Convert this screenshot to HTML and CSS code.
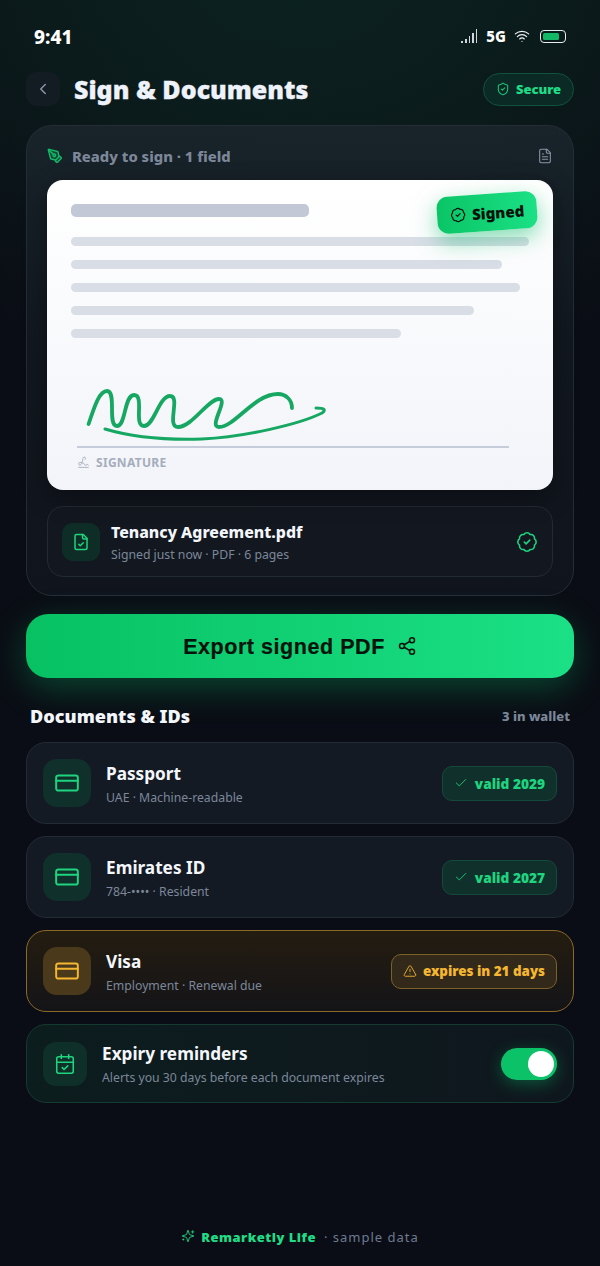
FILE: index.html
```html
<!DOCTYPE html>
<html lang="en">
<head>
    <meta charset="UTF-8">
    <meta name="viewport" content="width=device-width, initial-scale=1.0">
    <title>Sign &amp; Documents</title>
    <link rel="stylesheet" href="styles.css">
</head>
<body>
    <div class="screen">
        <div class="status-bar">
            <span class="time">9:41</span>
            <div class="status-right">
                <div class="signal"><i></i><i></i><i></i><i></i><i></i></div>
                <span class="net">5G</span>
                <svg class="icon wifi" viewBox="0 0 24 24"><path d="M12 20h.01"/><path d="M2 8.82a15 15 0 0 1 20 0"/><path d="M5 12.859a10 10 0 0 1 14 0"/><path d="M8.5 16.429a5 5 0 0 1 7 0"/></svg>
                <div class="battery"><div class="battery-fill"></div></div>
            </div>
        </div>

        <header class="top-bar">
            <button class="back-btn"><svg class="icon" viewBox="0 0 24 24"><path d="m15 18-6-6 6-6"/></svg></button>
            <h1>Sign &amp; Documents</h1>
            <div class="secure-pill">
                <svg class="icon" viewBox="0 0 24 24"><path d="M20 13c0 5-3.5 7.5-7.66 8.95a1 1 0 0 1-.67-.01C7.5 20.5 4 18 4 13V6a1 1 0 0 1 1-1c2 0 4.5-1.2 6.24-2.72a1.17 1.17 0 0 1 1.52 0C14.51 3.81 17 5 19 5a1 1 0 0 1 1 1z"/><path d="m9 12 2 2 4-4"/></svg>
                Secure
            </div>
        </header>

        <section class="sign-card">
            <div class="sign-head">
                <svg class="icon pen" viewBox="0 0 24 24"><path d="M15.707 21.293a1 1 0 0 1-1.414 0l-1.586-1.586a1 1 0 0 1 0-1.414l5.586-5.586a1 1 0 0 1 1.414 0l1.586 1.586a1 1 0 0 1 0 1.414z"/><path d="m18 13-1.375-6.874a1 1 0 0 0-.746-.776L3.235 2.028a1 1 0 0 0-1.207 1.207L5.35 15.879a1 1 0 0 0 .776.746L13 18"/><path d="m2.3 2.3 7.286 7.286"/><circle cx="11" cy="11" r="2"/></svg>
                <span class="sign-title">Ready to sign · 1 field</span>
                <svg class="icon doc" viewBox="0 0 24 24"><path d="M15 2H6a2 2 0 0 0-2 2v16a2 2 0 0 0 2 2h12a2 2 0 0 0 2-2V7Z"/><path d="M14 2v4a2 2 0 0 0 2 2h4"/><path d="M10 9H8"/><path d="M16 13H8"/><path d="M16 17H8"/></svg>
            </div>

            <div class="paper">
                <div class="signed-stamp">
                    <svg class="icon" viewBox="0 0 24 24"><path d="M3.85 8.62a4 4 0 0 1 4.78-4.77 4 4 0 0 1 6.74 0 4 4 0 0 1 4.78 4.78 4 4 0 0 1 0 6.74 4 4 0 0 1-4.77 4.78 4 4 0 0 1-6.75 0 4 4 0 0 1-4.78-4.77 4 4 0 0 1 0-6.76Z"/><path d="m9 12 2 2 4-4"/></svg>
                    Signed
                </div>
                <div class="line line-title"></div>
                <div class="line w100"></div>
                <div class="line w94"></div>
                <div class="line w98"></div>
                <div class="line w88"></div>
                <div class="line w72"></div>
                <svg class="scribble" viewBox="80 385 260 60">
                    <path class="scribble-main" d="M88.6 424 C94 408 99 391 107 391 C117 391 107 426 117 426 C126 426 124 395 134 395 C145 395 133 426 144 426 C154 426 159 396 170 396 C181 396 166 427 178 427 C192 427 208 399 219 399 C229 399 208 427 219 427 C235 427 254 394 278 394 C286 394 292 400 292 408"/>
                    <path class="scribble-low" d="M105 429 C135 438 170 440 202 439 C245 437 300 424 322 413 C326 410 325 408 316 408"/>
                </svg>
                <div class="sig-line"></div>
                <div class="sig-label">
                    <svg class="icon" viewBox="0 0 24 24"><path d="m21 17-2.156-1.868A.5.5 0 0 0 18 15.5v.5a1 1 0 0 1-1 1h-2a1 1 0 0 1-1-1c0-2.545-3.991-3.97-8.5-4a1 1 0 0 0 0 5c4.153 0 4.745-11.295 5.708-13.5a2.5 2.5 0 1 1 3.31 3.284"/><path d="M3 21h18"/></svg>
                    SIGNATURE
                </div>
            </div>

            <div class="file-row">
                <div class="file-icon">
                    <svg class="icon" viewBox="0 0 24 24"><path d="M15 2H6a2 2 0 0 0-2 2v16a2 2 0 0 0 2 2h12a2 2 0 0 0 2-2V7Z"/><path d="M14 2v4a2 2 0 0 0 2 2h4"/><path d="m9 15 2 2 4-4"/></svg>
                </div>
                <div class="file-text">
                    <div class="file-name">Tenancy Agreement.pdf</div>
                    <div class="file-sub">Signed just now · PDF · 6 pages</div>
                </div>
                <svg class="icon file-badge" viewBox="0 0 24 24"><path d="M3.85 8.62a4 4 0 0 1 4.78-4.77 4 4 0 0 1 6.74 0 4 4 0 0 1 4.78 4.78 4 4 0 0 1 0 6.74 4 4 0 0 1-4.77 4.78 4 4 0 0 1-6.75 0 4 4 0 0 1-4.78-4.77 4 4 0 0 1 0-6.76Z"/><path d="m9 12 2 2 4-4"/></svg>
            </div>
        </section>

        <button class="export-btn">
            Export signed PDF
            <svg class="icon" viewBox="0 0 24 24"><circle cx="18" cy="5" r="3"/><circle cx="6" cy="12" r="3"/><circle cx="18" cy="19" r="3"/><path d="m8.59 13.51 6.83 3.98"/><path d="m15.41 6.51-6.82 3.98"/></svg>
        </button>

        <div class="section-head">
            <h2>Documents &amp; IDs</h2>
            <span class="section-count">3 in wallet</span>
        </div>

        <div class="doc-list">
            <div class="doc-card">
                <div class="doc-icon"><svg class="icon" viewBox="0 0 24 24"><rect width="20" height="14" x="2" y="5" rx="2"/><path d="M2 10h20"/></svg></div>
                <div class="doc-text">
                    <div class="doc-name">Passport</div>
                    <div class="doc-sub">UAE · Machine-readable</div>
                </div>
                <div class="doc-pill"><svg class="icon" viewBox="0 0 24 24"><path d="M20 6 9 17l-5-5"/></svg>valid 2029</div>
            </div>
            <div class="doc-card">
                <div class="doc-icon"><svg class="icon" viewBox="0 0 24 24"><rect width="20" height="14" x="2" y="5" rx="2"/><path d="M2 10h20"/></svg></div>
                <div class="doc-text">
                    <div class="doc-name">Emirates ID</div>
                    <div class="doc-sub">784-•••• · Resident</div>
                </div>
                <div class="doc-pill"><svg class="icon" viewBox="0 0 24 24"><path d="M20 6 9 17l-5-5"/></svg>valid 2027</div>
            </div>
            <div class="doc-card warn">
                <div class="doc-icon"><svg class="icon" viewBox="0 0 24 24"><rect width="20" height="14" x="2" y="5" rx="2"/><path d="M2 10h20"/></svg></div>
                <div class="doc-text">
                    <div class="doc-name">Visa</div>
                    <div class="doc-sub">Employment · Renewal due</div>
                </div>
                <div class="doc-pill"><svg class="icon" viewBox="0 0 24 24"><path d="m21.73 18-8-14a2 2 0 0 0-3.48 0l-8 14A2 2 0 0 0 4 21h16a2 2 0 0 0 1.73-3"/><path d="M12 9v4"/><path d="M12 17h.01"/></svg>expires in 21 days</div>
            </div>
            <div class="reminder-card">
                <div class="reminder-icon"><svg class="icon" viewBox="0 0 24 24"><path d="M8 2v4"/><path d="M16 2v4"/><rect width="18" height="18" x="3" y="4" rx="2"/><path d="M3 10h18"/><path d="m9 16 2 2 4-4"/></svg></div>
                <div class="doc-text">
                    <div class="doc-name">Expiry reminders</div>
                    <div class="doc-sub">Alerts you 30 days before each document expires</div>
                </div>
                <div class="toggle"><div class="knob"></div></div>
            </div>
        </div>

        <footer class="page-foot">
            <svg class="icon" viewBox="0 0 24 24"><path d="M9.937 15.5A2 2 0 0 0 8.5 14.063l-6.135-1.582a.5.5 0 0 1 0-.962L8.5 9.936A2 2 0 0 0 9.937 8.5l1.582-6.135a.5.5 0 0 1 .963 0L14.063 8.5A2 2 0 0 0 15.5 9.937l6.135 1.581a.5.5 0 0 1 0 .964L15.5 14.063a2 2 0 0 0-1.437 1.437l-1.582 6.135a.5.5 0 0 1-.963 0z"/><path d="M20 3v4"/><path d="M22 5h-4"/><path d="M4 17v2"/><path d="M5 18H3"/></svg>
            <span class="brand">Remarketly Life</span>
            <span class="foot-note">· sample data</span>
        </footer>
    </div>
</body>
</html>
```

FILE: styles.css
```css
* {
    box-sizing: border-box;
}
html, body {
    margin: 0;
    height: 100%;
}
body {
    background-color: #0a0d15;
    font-family: "Noto Sans", sans-serif;
    color: #f3f6fb;
}
.screen {
    min-height: 1266px;
    display: flex;
    flex-direction: column;
    padding: 0 26px;
    background: radial-gradient(ellipse 560px 420px at 50% -40px, #0c2320 0%, #0b1a1b 50%, rgba(10, 13, 21, 0) 100%);
}
.icon {
    width: 18px;
    height: 18px;
    fill: none;
    stroke: currentColor;
    stroke-width: 2;
    stroke-linecap: round;
    stroke-linejoin: round;
    flex-shrink: 0;
}

/* barra de estado */
.status-bar {
    height: 72px;
    display: flex;
    align-items: center;
    justify-content: space-between;
    padding: 0 8px;
}
.time {
    font-size: 19px;
    font-weight: 800;
    color: #fff;
    margin-top: 2px;
}
.status-right {
    display: flex;
    align-items: center;
    gap: 8px;
}
.signal {
    display: flex;
    align-items: flex-end;
    gap: 2px;
    height: 14px;
    margin-right: 1px;
}
.signal i {
    width: 1.6px;
    background: #cfd6df;
}
.signal i:nth-child(1) { height: 2px; }
.signal i:nth-child(2) { height: 4px; }
.signal i:nth-child(3) { height: 7px; }
.signal i:nth-child(4) { height: 10px; }
.signal i:nth-child(5) { height: 14px; }
.net {
    font-size: 15px;
    font-weight: 800;
    color: #fff;
}
.wifi {
    width: 16px;
    height: 16px;
    color: #eef2f6;
    stroke-width: 1.8;
}
.battery {
    width: 26px;
    height: 13px;
    border: 1.3px solid #e8edf2;
    border-radius: 4px;
    padding: 2px;
    margin-left: 2px;
}
.battery-fill {
    width: 16px;
    height: 100%;
    background: #12b865;
    border-radius: 1.5px;
}

/* cabecera */
.top-bar {
    height: 34px;
    display: flex;
    align-items: center;
    margin-bottom: 19px;
}
.back-btn {
    width: 34px;
    height: 34px;
    border: none;
    border-radius: 11px;
    background: #141c23;
    color: #8a94a6;
    display: flex;
    align-items: center;
    justify-content: center;
    padding: 0;
    margin-right: 14px;
}
.top-bar h1 {
    margin: 0;
    flex: 1;
    font-size: 25px;
    font-weight: 900;
    -webkit-text-stroke: 0.3px #eef2fb;
    color: #eef2fb;
}
.secure-pill {
    height: 33px;
    padding: 0 12px;
    border-radius: 17px;
    border: 1px solid #12523c;
    background: #0b2a25;
    color: #1fdc86;
    font-size: 13px;
    font-weight: 900;
    display: flex;
    align-items: center;
    gap: 6px;
}
.secure-pill .icon {
    width: 14px;
    height: 14px;
    stroke-width: 1.8;
    color: #1cc47a;
}

/* tarjeta de firma */
.sign-card {
    height: 471px;
    border: 1px solid #242d36;
    border-radius: 26px;
    padding: 20px;
    background: linear-gradient(180deg, #18232a 0%, #121820 45%, #10141d 100%);
}
.sign-head {
    height: 20px;
    display: flex;
    align-items: center;
    gap: 9px;
    margin-bottom: 14px;
}
.pen {
    width: 16px;
    height: 16px;
    color: #12b865;
    fill: rgba(18, 184, 101, 0.25);
    stroke-width: 2.2;
}
.sign-title {
    flex: 1;
    font-size: 14.8px;
    font-weight: 800;
    color: #7c8799;
}
.doc {
    width: 16px;
    height: 16px;
    color: #8a94a6;
    stroke-width: 1.6;
}
.paper {
    position: relative;
    height: 310px;
    border-radius: 16px;
    padding: 24px;
    background: linear-gradient(180deg, #ffffff 0%, #f2f4f9 100%);
    box-shadow: 0 8px 24px rgba(0, 0, 0, 0.35);
}
.line {
    height: 9px;
    border-radius: 5px;
    background: #d8dde6;
    margin-bottom: 14px;
}
.line-title {
    width: 52%;
    height: 13px;
    background: #c2c8d6;
    margin-bottom: 20px;
}
.w100 { width: 100%; }
.w94 { width: 94%; }
.w98 { width: 98%; }
.w88 { width: 88%; }
.w72 { width: 72%; }
.signed-stamp {
    position: absolute;
    top: 14px;
    right: 16px;
    height: 37px;
    padding: 0 13px;
    border-radius: 11px;
    background: linear-gradient(90deg, #0ac566 0%, #1be085 100%);
    color: #04120c;
    font-size: 15px;
    font-weight: 900;
    display: flex;
    align-items: center;
    gap: 6px;
    transform: rotate(-4deg);
    box-shadow: 0 8px 22px rgba(11, 190, 105, 0.5);
}
.signed-stamp .icon {
    width: 16px;
    height: 16px;
    stroke-width: 1.8;
}
.scribble {
    display: block;
    width: 260px;
    height: 60px;
    margin: 47px 0 0 9px;
    fill: none;
    stroke: #16a862;
    stroke-linecap: round;
    stroke-linejoin: round;
}
.scribble-main {
    stroke-width: 3.8;
}
.scribble-low {
    stroke-width: 3;
}
.sig-line {
    height: 2px;
    background: #c6ccd9;
    margin: 1px 20px 0 6px;
}
.sig-label {
    display: flex;
    align-items: center;
    gap: 6px;
    margin: 6px 0 0 6px;
    font-size: 12px;
    font-weight: 700;
    letter-spacing: 0.3px;
    color: #a5adbb;
}
.sig-label .icon {
    width: 13px;
    height: 13px;
    stroke-width: 1.6;
}
.file-row {
    height: 71px;
    margin-top: 16px;
    padding: 0 14px;
    border: 1px solid #222a33;
    border-radius: 16px;
    background: #131820;
    display: flex;
    align-items: center;
    gap: 11px;
}
.file-icon {
    width: 38px;
    height: 38px;
    border-radius: 11px;
    background: #0f2d27;
    color: #1fd47f;
    display: flex;
    align-items: center;
    justify-content: center;
}
.file-text {
    flex: 1;
    padding-top: 1px;
}
.file-name {
    font-size: 15.85px;
    font-weight: 800;
    color: #f3f6fb;
    line-height: 22px;
}
.file-sub {
    font-size: 12.25px;
    color: #7c8799;
    line-height: 19px;
    margin-top: 2px;
}
.file-badge {
    width: 22px;
    height: 22px;
    color: #1fd47f;
    stroke-width: 1.7;
}

/* boton principal */
.export-btn {
    height: 64px;
    margin-top: 18px;
    padding: 2px 0 0;
    border: none;
    border-radius: 22px;
    background: linear-gradient(90deg, #07c163 0%, #1be085 100%);
    color: #04140c;
    font-family: "Liberation Sans", Arial, sans-serif;
    font-size: 21.5px;
    font-weight: 700;
    letter-spacing: 0.55px;
    -webkit-text-stroke: 0.2px #04140c;
    display: flex;
    align-items: center;
    justify-content: center;
    gap: 12px;
    box-shadow: 0 10px 34px rgba(10, 200, 110, 0.3);
}
.export-btn .icon {
    width: 20px;
    height: 20px;
    stroke-width: 1.8;
    margin-top: -2px;
}

/* documentos */
.section-head {
    display: flex;
    align-items: center;
    justify-content: space-between;
    height: 24px;
    margin: 26px 4px 14px;
}
.section-head h2 {
    margin: 0;
    font-size: 18.1px;
    font-weight: 900;
    color: #f3f6fb;
}
.section-count {
    font-size: 13px;
    font-weight: 800;
    color: #7c8799;
}
.doc-list {
    display: flex;
    flex-direction: column;
    gap: 12px;
}
.doc-card {
    height: 82px;
    padding: 0 16px;
    border: 1px solid #232b35;
    border-radius: 20px;
    background: #141a24;
    display: flex;
    align-items: center;
    gap: 15px;
}
.doc-card .doc-text {
    padding-top: 2px;
}
.doc-icon {
    width: 48px;
    height: 48px;
    border-radius: 14px;
    background: #10302b;
    color: #1fd47f;
    display: flex;
    align-items: center;
    justify-content: center;
}
.doc-icon .icon {
    width: 26px;
    height: 26px;
    stroke-width: 1.8;
}
.doc-text {
    flex: 1;
}
.doc-name {
    font-size: 17.2px;
    font-weight: 700;
    line-height: 24px;
    margin-top: 1px;
    color: #f3f6fb;
}
.doc-sub {
    font-size: 12.25px;
    line-height: 18px;
    margin-top: 3px;
    color: #7c8799;
}
.doc-pill {
    height: 35px;
    padding: 0 11px;
    border: 1px solid #16493d;
    border-radius: 10px;
    background: #10302b;
    color: #1fd47f;
    font-size: 13.7px;
    font-weight: 900;
    display: flex;
    align-items: center;
    gap: 7px;
}
.doc-pill .icon {
    width: 14px;
    height: 14px;
    stroke-width: 1.5;
}
.doc-card.warn {
    border-color: #8b6a27;
    background: linear-gradient(180deg, #241c10 0%, #141418 100%);
}
.warn .doc-icon {
    background: #4a3a1b;
    color: #f5b731;
}
.warn .doc-pill {
    border-color: #7d6228;
    background: #33291a;
    color: #f5b731;
    font-size: 13.4px;
    gap: 6px;
}
.reminder-card {
    height: 79px;
    padding: 0 16px;
    border: 1px solid #153a30;
    border-radius: 20px;
    background: linear-gradient(90deg, #0c1d1e 0%, #0f171e 100%);
    display: flex;
    align-items: center;
    gap: 15px;
}
.reminder-icon {
    width: 44px;
    height: 44px;
    border-radius: 13px;
    background: #0f2f29;
    color: #1fd47f;
    display: flex;
    align-items: center;
    justify-content: center;
}
.reminder-icon .icon {
    width: 22px;
    height: 22px;
    stroke-width: 1.7;
}
.toggle {
    width: 56px;
    height: 32px;
    border-radius: 16px;
    background: #0cc268;
    padding: 3px;
    display: flex;
    justify-content: flex-end;
    box-shadow: 0 4px 16px rgba(10, 200, 110, 0.35);
}
.knob {
    width: 26px;
    height: 26px;
    border-radius: 50%;
    background: #fff;
}

/* pie */
.page-foot {
    margin-top: auto;
    height: 38px;
    display: flex;
    align-items: flex-start;
    justify-content: center;
    gap: 6px;
    font-size: 13px;
    line-height: 18px;
}
.page-foot .icon {
    width: 14px;
    height: 14px;
    color: #1cc47a;
    stroke-width: 1.7;
    margin-top: 1px;
}
.brand {
    font-weight: 900;
    color: #1fdc86;
    letter-spacing: 0.5px;
    margin-right: 2px;
}
.foot-note {
    color: #6e7a90;
    letter-spacing: 1px;
}
```
